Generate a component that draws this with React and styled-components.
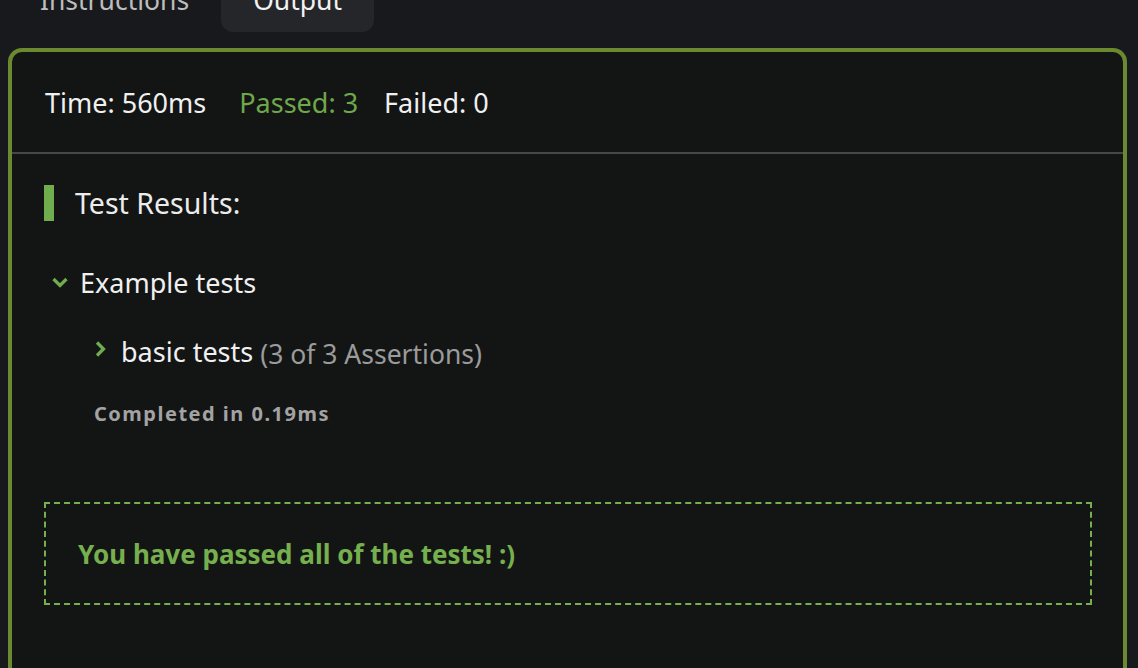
import React from 'react';
import styled, { createGlobalStyle } from 'styled-components';

const GlobalStyle = createGlobalStyle`
  html, body { margin: 0; padding: 0; background: #18191c; overflow: hidden; }
  body { font-family: "Noto Sans", "Open Sans", sans-serif; color: #ececec; }
`;

const Page = styled.div`
  width: 1138px;
  height: 668px;
  display: flex;
  flex-direction: column;
`;

const TabBar = styled.div`
  height: 32px;
  display: flex;
  align-items: flex-end;
  padding-left: 20px;
`;

const Tab = styled.div`
  height: 64px;
  display: flex;
  align-items: center;
  justify-content: center;
  padding: 0 ${p => (p.$active ? 32 : 20)}px;
  border-radius: 0 0 12px 12px;
  background: ${p => (p.$active ? '#25262a' : 'transparent')};
  color: ${p => (p.$active ? '#f2f2f2' : '#bdbdbd')};
  font-size: 26.5px;
  margin-left: ${p => (p.$active ? 12 : 0)}px;
`;

const Panel = styled.div`
  margin: 16px 11px 0 8px;
  flex: 1;
  border: 4px solid #6b8a30;
  border-bottom: none;
  border-radius: 14px 14px 0 0;
  background: #131515;
  display: flex;
  flex-direction: column;
`;

const Header = styled.div`
  height: 100px;
  display: flex;
  align-items: center;
  padding-left: 33px;
  border-bottom: 2px solid #464747;
  font-size: 27px;
`;

const Stat = styled.span`
  color: ${p => (p.$green ? '#6fa84a' : '#f0f0f0')};
  margin-right: ${p => p.$gap || 0}px;
`;

const Body = styled.div`
  padding: 31px 31px 0 32px;
  display: flex;
  flex-direction: column;
`;

const Title = styled.div`
  display: flex;
  align-items: center;
  gap: 21px;
  font-size: 28.5px;
  color: #ececec;
  height: 36px;
`;

const Bar = styled.span`
  width: 10px;
  height: 36px;
  background: #6fad4f;
`;

const Row = styled.div`
  display: flex;
  align-items: baseline;
  margin-left: ${p => p.$indent}px;
  margin-top: ${p => p.$top}px;
  font-size: 27px;
  line-height: 32px;
  color: #f0f0f0;
`;

const Chevron = styled.svg`
  flex-shrink: 0;
  align-self: center;
  margin-right: ${p => p.$gap}px;
  margin-bottom: ${p => p.$lift}px;
`;

const Muted = styled.span`
  color: #9b9b9b;
  font-size: 26.5px;
  margin-left: 7px;
  position: relative;
  top: 2px;
`;

const Completed = styled.div`
  margin: 34px 0 0 50px;
  font-size: 20px;
  line-height: 24px;
  font-weight: 700;
  letter-spacing: 1.5px;
  color: #a3a3a3;
`;

const Success = styled.div`
  margin-top: 76px;
  height: 99px;
  border: 2px dashed #76b04e;
  display: flex;
  align-items: center;
  padding-left: 32px;
  font-size: 26px;
  font-weight: 700;
  color: #76b04e;
`;

const ChevronDown = () => (
  <Chevron width="16" height="11" viewBox="0 0 16 11" $gap={12} $lift={1}>
    <path d="M1.5 2 L8 8.5 L14.5 2" fill="none" stroke="#6fad4f" strokeWidth="3.2" />
  </Chevron>
);

const ChevronRight = () => (
  <Chevron width="11" height="16" viewBox="0 0 11 16" $gap={15} $lift={6}>
    <path d="M2 1.5 L8.5 8 L2 14.5" fill="none" stroke="#6fad4f" strokeWidth="3.2" />
  </Chevron>
);

export default function App() {
  return (
    <Page>
      <GlobalStyle />
      <TabBar>
        <Tab>Instructions</Tab>
        <Tab $active>Output</Tab>
      </TabBar>
      <Panel>
        <Header>
          <Stat $gap={33}>Time: 560ms</Stat>
          <Stat $green $gap={26}>Passed: 3</Stat>
          <Stat>Failed: 0</Stat>
        </Header>
        <Body>
          <Title>
            <Bar />
            Test Results:
          </Title>
          <Row $indent={8} $top={46}>
            <ChevronDown />
            Example tests
          </Row>
          <Row $indent={51} $top={37}>
            <ChevronRight />
            basic tests
            <Muted>(3 of 3 Assertions)</Muted>
          </Row>
          <Completed>Completed in 0.19ms</Completed>
          <Success>You have passed all of the tests! :)</Success>
        </Body>
      </Panel>
    </Page>
  );
}
